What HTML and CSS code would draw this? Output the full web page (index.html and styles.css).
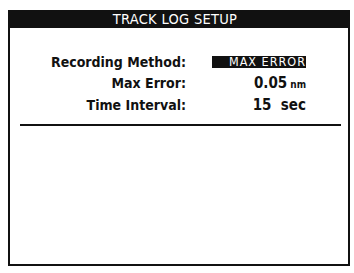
FILE: index.html
```html
<!DOCTYPE html>
<html>
<head>
<meta charset="utf-8">
<link rel="stylesheet" href="styles.css">
</head>
<body>
<div class="frame">
  <div class="titlebar">TRACK LOG SETUP</div>
  <div class="body">
    <div class="rows">
      <div class="label">Recording Method:</div>
      <div class="value"><span class="sel">MAX ERROR</span></div>
      <div class="label">Max Error:</div>
      <div class="value">0.05<span class="unit">nm</span></div>
      <div class="label">Time Interval:</div>
      <div class="value">15&nbsp; sec</div>
    </div>
    <div class="rule"></div>
  </div>
</div>
</body>
</html>
```
FILE: styles.css
```css
html, body {
  margin: 0;
  padding: 0;
  background: #fff;
}
.frame {
  margin: 10px 0 0 8px;
  width: 342px;
  height: 256px;
  box-sizing: border-box;
  border: 2px solid #111;
  border-top: none;
  display: flex;
  flex-direction: column;
}
.titlebar {
  height: 18px;
  margin: 0 -2px;
  background: #111;
  color: #fff;
  font-family: "Liberation Sans Narrow", "DejaVu Sans Condensed", sans-serif;
  font-size: 14.5px;
  line-height: 19px;
  text-align: center;
  letter-spacing: 0.3px;
  padding-right: 8px;
}
.body {
  padding-top: 26px;
}
.rows {
  display: grid;
  grid-template-columns: 176px 120px;
  row-gap: 4px;
  font-family: "DejaVu Sans Condensed", "DejaVu Sans", sans-serif;
  font-weight: bold;
  font-size: 14px;
  line-height: 17px;
  color: #111;
}
.label {
  text-align: right;
}
.value {
  text-align: right;
  font-size: 15px;
}
.sel {
  display: inline-block;
  background: #111;
  color: #fff;
  font-family: "Liberation Sans Narrow", "DejaVu Sans Condensed", sans-serif;
  font-weight: normal;
  font-size: 12.5px;
  line-height: 12px;
  padding: 0 0 0 17px;
  letter-spacing: 1px;
  vertical-align: 1px;
}
.unit {
  font-size: 10px;
  margin-left: 3px;
}
.rule {
  height: 2px;
  background: #111;
  margin: 10px 7px 0 10px;
}
```
